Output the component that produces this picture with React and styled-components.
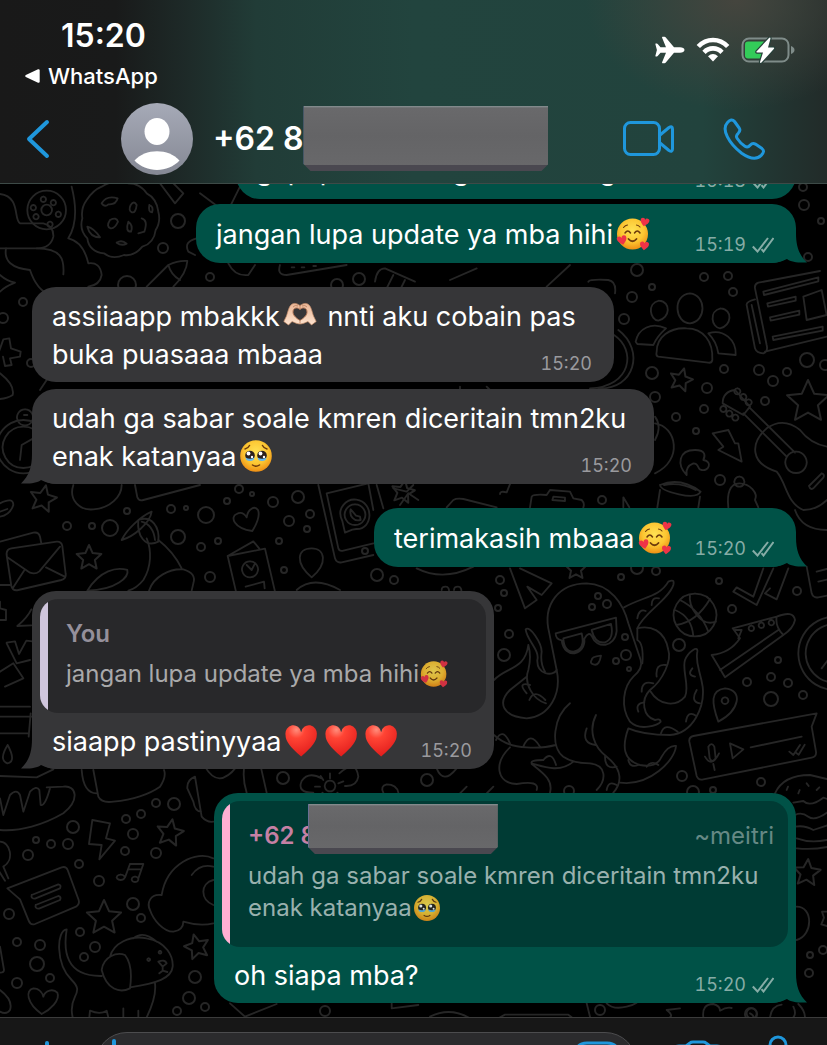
import React from "react";
import styled, { createGlobalStyle } from "styled-components";

const GlobalStyle = createGlobalStyle`
  * {
    box-sizing: border-box;
  }

  body {
    margin: 0;
    overflow: hidden;
    background: #000;
    color: #fff;
    font-family: Inter, "Liberation Sans", sans-serif;
  }

  button {
    display: flex;
    padding: 0;
    border: 0;
    background: none;
    color: inherit;
    font: inherit;
  }
`;

const Screen = styled.div`
  display: flex;
  flex-direction: column;
  height: 100vh;
  overflow: hidden;
`;

/* ---------- header ---------- */

const Header = styled.header`
  position: relative;
  flex: none;
  border-bottom: 1px solid #3d4a47;
  background:
    radial-gradient(ellipse 150px 110px at 89% 0, #45453e 0%, rgba(69, 69, 62, 0) 100%),
    linear-gradient(90deg, #191919 0%, #191a1a 14%, #1e2b29 23%, #213c37 31%, #22443e 50%, #22433d 85%, #222b29 100%);
`;

const StatusBar = styled.div`
  display: flex;
  justify-content: space-between;
  padding: 14px 32px 4px 25px;
`;

const StatusLeft = styled.div`
  display: flex;
  flex-direction: column;
  gap: 4px;
`;

const Clock = styled.time`
  padding-left: 36px;
  font-size: 32px;
  font-weight: 600;
  line-height: 44px;
`;

const BackToApp = styled.a`
  display: flex;
  align-items: center;
  gap: 8px;
  color: #fff;
  font-size: 22px;
  font-weight: 500;
  line-height: 28px;
  text-decoration: none;
`;

const StatusIcons = styled.div`
  display: flex;
  align-items: center;
  gap: 11px;
  height: 71px;
`;

const NavBar = styled.nav`
  display: flex;
  align-items: center;
  height: 89px;
  padding: 0 62px 0 26px;
`;

const Avatar = styled.div`
  display: flex;
  margin: 0 20px 0 71px;
`;

const Contact = styled.h1`
  display: flex;
  flex: 1;
  align-items: center;
  margin: 0;
  font-size: 32px;
  font-weight: 600;
  white-space: nowrap;
`;

const NavActions = styled.div`
  display: flex;
  align-items: center;
  gap: 48px;
  color: #1f97dc;
`;

const Redaction = styled.span`
  flex: none;
  width: ${(p) => (p.$small ? 190 : 245)}px;
  height: ${(p) => (p.$small ? 50 : 65)}px;
  margin: ${(p) => (p.$small ? "-16px 0 -2px -8px" : "0")};
  background: linear-gradient(180deg, #8a9496 0, #69696b 2px, #646466 50%, #68686a 100%);
  border-bottom: 6px solid #4a4850;
  border-left: 1px solid #6a6f93;
  clip-path: polygon(0 0, 100% 0, 100% calc(100% - 7px), calc(100% - 7px) 100%, 7px 100%, 0 calc(100% - 7px));
`;

/* ---------- chat ---------- */

const Chat = styled.main`
  position: relative;
  flex: none;
  overflow: hidden;
  background: #000;
`;

const Wallpaper = styled.svg`
  position: absolute;
  inset: 0;
  width: 100%;
  height: 100%;
  fill: none;
  stroke: #262626;
  stroke-width: 2;
  stroke-linecap: round;
  stroke-linejoin: round;
`;

const Messages = styled.ol`
  position: relative;
  display: flex;
  flex-direction: column;
  margin: -44px 0 0;
  padding: 0 31px 14px 32px;
  list-style: none;
`;

const Bubble = styled.li`
  position: relative;
  align-self: ${(p) => (p.$out ? "flex-end" : "flex-start")};
  width: ${(p) => p.$width}px;
  max-width: 100%;
  margin-top: ${(p) => p.$gap || 0}px;
  border-radius: 24px;
  background: ${(p) => (p.$out ? "#005247" : "#363638")};
  color: ${(p) => (p.$out ? "#005247" : "#363638")};
`;

const TailShape = styled.svg`
  position: absolute;
  bottom: 0;
  ${(p) => (p.$out ? "right: -11px;" : "left: -11px; transform: scaleX(-1);")}
`;

const Body = styled.div`
  position: relative;
  display: grid;
  align-items: center;
  min-height: ${(p) => (p.$quoted ? 56 : 59)}px;
  padding: ${(p) => (p.$quoted ? 9 : 11)}px 22px 8px 20px;
  color: #fff;

  > * {
    grid-area: 1 / 1;
  }
`;

const Text = styled.p`
  margin: 0;
  font-size: 27px;
  line-height: 38px;
  white-space: nowrap;
`;

const Meta = styled.div`
  display: flex;
  place-self: end;
  align-items: center;
  gap: 6px;
  color: ${(p) => (p.$out ? "#86aca6" : "#9a9a9e")};
  font-size: 18px;
  font-variant-numeric: tabular-nums;
  line-height: 20px;
`;

const QuoteWrap = styled.div`
  padding: 8px 8px 0;
`;

const QuoteBox = styled.blockquote`
  margin: 0;
  padding: 19px 14px 23px 26px;
  overflow: hidden;
  border-radius: 18px;
  background: ${(p) =>
    p.$out
      ? "linear-gradient(90deg, #ffb0d3 8px, #003b34 8px)"
      : "linear-gradient(90deg, #d0c6dd 8px, #28282a 8px)"};
  color: ${(p) => (p.$out ? "#99b1ae" : "#a9a9aa")};
  font-size: 24px;
  line-height: 32px;
`;

const QuoteHead = styled.div`
  display: flex;
  align-items: center;
  height: 32px;
  margin-bottom: 8px;
  white-space: nowrap;
`;

const QuoteAuthor = styled.strong`
  color: ${(p) => (p.$out ? "#c580a4" : "#95909b")};
  font-weight: 600;
`;

const QuoteAlias = styled.span`
  margin-left: auto;
  color: #668985;
`;

const QuoteText = styled.p`
  margin: 0;
  white-space: nowrap;
`;

const EmojiSvg = styled.svg`
  width: ${(p) => (p.$small ? 28 : 34)}px;
  height: ${(p) => (p.$small ? 28 : 34)}px;
  margin: 0 ${(p) => (p.$small ? 1 : 3)}px;
  vertical-align: ${(p) => (p.$small ? -6 : -7)}px;
  opacity: ${(p) => (p.$small ? 0.85 : 1)};
`;

/* ---------- composer ---------- */

const Composer = styled.form`
  display: flex;
  flex: none;
  align-items: center;
  padding: 14px 24px 20px;
  border-top: 1px solid #3b3b3b;
  background: #171717;
  color: #1f97dc;
`;

const Field = styled.label`
  display: flex;
  flex: 1;
  align-items: center;
  height: 64px;
  margin: 0 34px 0 25px;
  padding: 0 16px;
  border: 1px solid #4c4c4e;
  border-radius: 32px;
  background: #2b2b2d;
`;

const Caret = styled.span`
  width: 4px;
  height: 50px;
  border-radius: 2px;
  background: #1f97dc;
`;

const Input = styled.input`
  flex: 1;
  min-width: 0;
  border: 0;
  outline: 0;
  background: none;
  color: #fff;
  font-size: 27px;
`;

const ComposerActions = styled.div`
  display: flex;
  align-items: center;
  gap: 28px;
`;

/* ---------- emoji ---------- */

const HEART = "M16 29C5 20 1 15 1 9.500A7.500 7.500 0 0 1 16 7a7.500 7.500 0 0 1 15 2.500C31 15 27 20 16 29Z";

function FaceGradient({ id }) {
  return (
    <radialGradient id={id} cx=".5" cy=".38" r=".62">
      <stop offset="0" stopColor="#ffe254" />
      <stop offset=".6" stopColor="#fcc632" />
      <stop offset="1" stopColor="#ee8f14" />
    </radialGradient>
  );
}

function LoveFace({ small }) {
  return (
    <EmojiSvg $small={small} viewBox="0 0 34 34" role="img" aria-label="smiling face with hearts">
      <defs>
        <FaceGradient id="love" />
      </defs>
      <circle cx="16.500" cy="17" r="15.500" fill="url(#love)" />
      <g fill="none" stroke="#6d3b0c" strokeWidth="1.500" strokeLinecap="round">
        <path d="M9 16q2.800-4 5.500 0M18.500 16q2.800-4 5.500 0" />
        <path d="M7.500 10.500q1.800-2.300 4-2.500M20.500 8q2 .2 3.500 2" strokeWidth="1.100" />
        <path d="M12.500 22q4 4.500 8 0" strokeWidth="1.800" />
      </g>
      <g fill="#ef3347">
        <path d={HEART} transform="translate(25 0) rotate(12) scale(.29)" />
        <path d={HEART} transform="translate(0 20) rotate(-14) scale(.32)" />
        <path d={HEART} transform="translate(24 24) rotate(6) scale(.3)" />
      </g>
    </EmojiSvg>
  );
}

function TearyFace({ small }) {
  return (
    <EmojiSvg $small={small} viewBox="0 0 34 34" role="img" aria-label="face holding back tears">
      <defs>
        <FaceGradient id="teary" />
      </defs>
      <circle cx="17" cy="17" r="15.800" fill="url(#teary)" />
      <circle cx="11" cy="16.500" r="4.800" fill="#2c211c" />
      <circle cx="23" cy="16.500" r="4.800" fill="#2c211c" />
      <path d="M6.500 18.500q4.500 2.500 9 0-.5 3.500-4.500 3.500t-4.500-3.500ZM18.500 18.500q4.500 2.500 9 0-.5 3.500-4.500 3.500t-4.500-3.500Z" fill="#62b8ee" />
      <g fill="#fff">
        <circle cx="9.500" cy="14.500" r="1.900" />
        <circle cx="21.500" cy="14.500" r="1.900" />
        <circle cx="13" cy="18" r="1.200" />
        <circle cx="25" cy="18" r="1.200" />
      </g>
      <path
        d="M6 10q3-.5 4.500-3.500M28 10q-3-.5-4.500-3.500M13.500 26q3.500 2.500 7 0"
        fill="none"
        stroke="#6d3b0c"
        strokeWidth="1.500"
        strokeLinecap="round"
      />
    </EmojiSvg>
  );
}

function HeartHands() {
  return (
    <EmojiSvg viewBox="0 0 34 34" role="img" aria-label="heart hands">
      <defs>
        <linearGradient id="skin" x1="0" y1="0" x2="0" y2="1">
          <stop offset="0" stopColor="#e9b696" />
          <stop offset="1" stopColor="#fde3cf" />
        </linearGradient>
      </defs>
      <path
        d="M17 7c-2-2.500-6-3.500-8.500-1.500C5.500 8 5 13 3.500 17L.8 22.500l4.700 3.500 3.500-3.500c2.500 1 5.500 2.500 8 2.500s5.500-1.500 8-2.500l3.500 3.500 4.700-3.500-2.700-5.500C29 13 28.500 8 25.500 5.500 23 3.500 19 4.500 17 7Z"
        fill="url(#skin)"
        stroke="#c98f6c"
        strokeWidth=".7"
      />
      <path d="M17 10.500c-3-3-7.500-1.500-7 3 .3 3.500 4 6 7 8 3-2 6.700-4.500 7-8 .5-4.500-4-6-7-3Z" fill="#363638" stroke="#b77a59" />
      <path d="M17 5.500v4.500M17 22v2.500M10 8q2-2.500 5-1M24 8q-2-2.500-5-1" fill="none" stroke="#c08563" strokeWidth=".9" />
    </EmojiSvg>
  );
}

function RedHeart() {
  return (
    <EmojiSvg viewBox="0 0 34 34" role="img" aria-label="red heart">
      <defs>
        <radialGradient id="red" cx=".35" cy=".15" r=".9">
          <stop offset="0" stopColor="#ff8d7c" />
          <stop offset=".3" stopColor="#ff4434" />
          <stop offset="1" stopColor="#e01b1b" />
        </radialGradient>
      </defs>
      <path d={HEART} transform="translate(.5 .5) scale(1.040 1.100)" fill="url(#red)" />
    </EmojiSvg>
  );
}

/* ---------- wallpaper doodles ---------- */

// x, y, radius
const DOTS = [
  [178, 221, 7], [163, 248, 5], [210, 277, 4], [127, 285, 9], [23, 302, 4], [3, 318, 5], [31, 363, 4],
  [337, 285, 6], [359, 279, 6], [632, 297, 5], [652, 287, 3], [637, 270, 6], [704, 277, 4], [728, 276, 4],
  [733, 292, 4], [624, 319, 5], [652, 373, 6], [724, 369, 4], [707, 388, 5], [655, 397, 5], [676, 417, 4],
  [704, 409, 4], [696, 431, 3], [759, 370, 5], [773, 381, 5], [787, 372, 4], [807, 360, 7], [765, 401, 4],
  [720, 480, 5], [602, 500, 4], [825, 365, 5], [803, 187, 4], [804, 205, 5], [821, 221, 3], [808, 257, 4],
  [239, 489, 4], [252, 494, 2], [227, 501, 3], [273, 502, 5], [298, 497, 6], [171, 509, 4], [186, 508, 2],
  [206, 515, 8], [127, 511, 3], [67, 526, 4], [92, 526, 3], [110, 528, 8], [178, 537, 7], [201, 547, 4],
  [218, 541, 3], [289, 521, 5], [310, 514, 4], [307, 529, 3], [279, 541, 3], [284, 570, 3], [210, 577, 5],
  [365, 551, 3], [377, 575, 6], [394, 580, 4], [500, 580, 4], [504, 593, 3], [498, 608, 3], [509, 634, 4],
  [504, 655, 6], [621, 577, 3], [656, 571, 4], [637, 568, 6], [719, 581, 3], [732, 609, 4], [679, 645, 6],
  [797, 591, 4], [778, 660, 3], [747, 682, 4], [771, 677, 4], [788, 683, 4], [803, 695, 4], [771, 699, 7],
  [682, 776, 5], [761, 782, 4], [713, 790, 3], [693, 792, 6], [427, 780, 6], [569, 791, 5], [598, 596, 3],
  [607, 604, 4], [592, 607, 3], [625, 637, 3], [626, 655, 5], [616, 661, 3], [629, 669, 2], [283, 778, 6],
  [156, 803, 4], [174, 804, 6], [126, 819, 4], [141, 814, 4], [73, 827, 6], [133, 834, 5], [36, 840, 3],
  [51, 844, 4], [68, 844, 5], [28, 855, 5], [79, 864, 4], [125, 851, 4], [156, 853, 5], [99, 881, 5],
  [133, 904, 6], [141, 918, 4], [9, 914, 5], [80, 932, 4], [17, 942, 4], [40, 945, 5], [95, 947, 5],
  [84, 957, 4], [37, 964, 7], [50, 978, 4], [17, 983, 5], [195, 977, 6], [189, 998, 6], [177, 1011, 4],
  [205, 1007, 4], [325, 1011, 5], [810, 955, 3], [809, 973, 4], [823, 950, 4], [600, 1010, 5], [751, 1014, 6],
];

// x, y, scale, rotation
const STARS = [
  [681, 380, 12, 15], [808, 402, 22, 0], [43, 499, 14, 12], [89, 558, 13, 0], [170, 833, 14, 10],
  [104, 918, 18, 0], [197, 947, 13, -15], [807, 873, 14, 5], [576, 569, 11, 0], [403, 492, 12, 10],
];

const STAR = "M0-1 .28-.38 .95-.31 .45.15 .59.81 0 .48-.59.81-.45.15-.95-.31-.28-.38Z";

// each sheet is drawn at three times its final size
const SHEETS = [
  {
    at: "0 180",
    paths: [
      "M0 42C62 50 40 118 60 130h70q32 8 30 40-8 35-50 35H0",
      "M18 205Q8 262 90 270 110 330 150 345M110 205c72 0 84 30 80 78",
      "M215 20q25 100-10 155 45 10 60 75 35-5 40 35-5 30-40 35",
      "M82 90a58 58 0 1 0 116 0a58 58 0 1 0-116 0M124 90a16 16 0 1 0 32 0a16 16 0 1 0-32 0",
      "M100 75a8 8 0 1 0 .1 0M130 50a8 8 0 1 0 .1 0M160 60a8 8 0 1 0 .1 0M175 95a8 8 0 1 0 .1 0M150 125a8 8 0 1 0 .1 0M108 102a8 8 0 1 0 .1 0",
      "M260 60q20-30 45-40 40-25 80-10 35 0 55 30 30 15 35 55 8 30-8 55-5 40-40 50-25 30-55 25-35 15-60-5-45-5-50-45-25-25-15-60-5-30 13-55",
      "M305 70q15-25 48-15-5 20-28 18-10 10-20-3M392 75q10-15 18 0-3 25-14 22-12-5-4-22M330 120q20-10 24 5-10 22-22 20-15-5-2-25M262 140q20 5 38 32-30 0-38-32M385 125q15 10 8 30-18 0-8-30M425 115q20 5 8 40l-18 5M350 188q15-10 30 3-15 8-30-3M448 75q14 5 8 22-12 0-8-22",
      "M440 320l65-65q30-14 57-12-2 37-42 77M505 255q8 30 35 45",
      "M-5 520 10 478l18-3 5 30 29 10-2 15-30 5 5 20-20 3-6-28",
      "M0 580q45 35 38 65-15 10-38 12M0 285q20 18 45 23-30 12-45 27",
      "M70 720a80 80 0 1 0 .1 0M70 740a62 62 0 1 0 .1 0M75 688a24 24 0 1 0 .1 0M60 840l5-45 35-20M72 705h10",
      "M120 630l20-30M480 10l45 60 25-30-40-40M600 40l80 60 40-80M590 175q-40 10-25 40l20 10M685 250q20 40 60 35l20-30",
      "M840 255q-10 30 20 30l180-30M875 262h8M905 262h8M940 258h8M1125 305q5-40 30-40l90 40M1180 285l-20 40M1215 300l-20 40",
    ],
  },
  {
    at: "410 270",
    paths: [
      "M840 70c-55 5-45 90 0 90 50-5 50-85 0-90M740 245c0-45 40-73 90-70 50 0 80 40 77 95q-2 10-12 8l-150-18q-8-2-5-15",
      "M747 92c-37 8-27 58-2 60 35-7 40-57 2-60M677 215c8-40 48-60 91-40q-28 25-38 50l-48-3Z",
      "M932 115c-37 8-27 58-2 60 35-7 40-57 2-60M895 190c45-15 85 20 82 65l-52-5q-5-35-30-60",
      "M1035 55q-2-13 10-17l185-35M1035 55l35 170q5 20-10 25-20 0-25-15l-25-130q-2-10 25-17M1065 245l186-45M1025 105l25 115",
      "M1060 65 1225 22v12L1062 75ZM1072 100l85-20v12l-83 18ZM1080 142l88-20v12l-86 18ZM1088 200l150-30v12l-148 28ZM1180 80l55-20 15 75-60 15Z",
      "M975 360q-37 5-37 40l62 35 20-25ZM1000 430l130 130M1018 412l137 136M1158 545a32 32 0 1 0 .1 0",
      "M1070 475c-50 45-50 105 30 130 30 35 30 95 80 115q40 0 71-30M1070 475q50-35 100 5 30 40 81 50M1155 720q20 60 96 60",
      "M1235 610l-38 38q5 15 15 5l28-30q5-10-5-13M982 355a9 9 0 1 0 .1 0M1000 372a9 9 0 1 0 .1 0M1016 388a9 9 0 1 0 .1 0M940 408a9 9 0 1 0 .1 0M958 422a9 9 0 1 0 .1 0M976 434a9 9 0 1 0 .1 0",
      "M908 490l47-10 20 40h10l10 55-70-35 15-10ZM830 615c-30-30-25-75 25-75 35 0 30 20 25 30 30 5 15 35-5 30-15 0-5-20-25-20q-25 10-20 35",
      "M750 645q60-25 122 20-10 20-65 8t-57-28M762 645q50-10 95 15M750 660l-8 52M870 680l-5 32",
      "M955 712c-5-42 5-72 33-72 32 0 57 30 47 50l10 22M988 620a15 15 0 1 0 .1 0M640 712v-30l18 30",
      "M360 712l5-32q5-8 45-5l10-15 60 5 10 20 25 5q10 10 5 22M430 680l35 3v10l-38-3ZM110 712l20-22q10-6 30-3l100 25",
      "M612 195c68 45 53 155-72 160M625 180c80 60 50 180-60 175M735 460c65 10 85 110 0 150M735 440q22 30 0 70",
      "M535 35q5-8 60-5 25 5 20 40M270 672q0-10 20-5l12-30M120 30l80-35M150 350v10M230 350l10 10M410 50l70-65",
    ],
  },
  {
    at: "0 480",
    paths: [
      "M20 225q-2-17 14-20l136-20q14-1 17 13l10 84q2 14-13 18L55 330q-17 4-21-12ZM22 232l68 46q16 6 28-4l62-74M38 325l34-53M194 290l-56-28M0 185l100-27q16-3 20 12l4 20M0 315h30",
      "M757 153c-57-8-67-43-47-51 18-10 28 6 30 10 4-26 24-36 34-22 8 20-6 45-17 63",
      "M683 228l77-44 18 22M683 228l112-22 30 129M683 228l25 107M750 244a24 24 0 1 0 .1 0M740 255l15 15 10-20M737 320l55-15 2 20",
      "M935 205c-45 0-50 45 0 87 50-42 40-87 0-87M890 330q50-45 130 0",
      "M955 15l50 220q5 15 20 12l95-22M1130 15l20 70M980 40l35 165q3 10 15 7l90-22M980 40l125-30 15 80",
      "M1035 158l-8-35c-20-40 15-68 42-64 55 8 50 90 0 88l-12 2ZM1065 73a31 31 0 1 0 .1 0M1052 88c-5 20 10 38 30 32l-2-10-12-3-10-12Z",
      "M262 332c38-62 88-72 120-62 6 20-32 60-120 62M440 175c15 35 15 85-10 125q-20 25-45 32M475 180q45 35 70 85M447 332c13-42 63-67 103-64q40 12 30 42l-5 22",
      "M365 180c15-30 55-70 90-85-5 35-55 75-90 85M415 120c40-15 65 20 60 65-40 20-65-20-60-65M425 125q35 10 40 55",
      "M220 15c-15 45 20 77 60 73 50-3 85-38 85-73M405 15l7 37q4 12 18 8l170-45M0 70q40-20 40 5-10 30-40 35M0 95l22-8",
      "M20 488l25-4 12 38 22-40 18 2M0 575l40-25 30 45-55 25M20 490l30 60 40-10M0 365v20l18 5v30H0M52 438q30-25 42-50M52 438l42-2",
      "M23 795q-28 45-1 55 28-5 1-55M0 680h90M0 710h95M0 760h85M0 888l110 4 50-24M92 700l-6 70",
      "M1180 25l40 10 20-20M1200 75l25-35 30 20",
    ],
  },
  {
    at: "410 560",
    paths: [
      "M440 330l-22-110c-23-90 32-150 112-150 70 2 110 60 125 120l37 110q8 25-22 50c-30 30-40 90-10 135 30 30 85 10 92 0q0-10-17-5c-35-10-45-60-15-90 40-30 65-90 55-120-10-60-55-75-93-65",
      "M642 142c58-32 108-32 133-77q20-10 15 10c-15 45-90 85-108 130v35q20 10 15 70",
      "M720 392c30 48 80 48 105 18 15-30-10-80 0-110 10-25 40-45 37-25-7 35 8 55 16 105 7 60-28 140-98 145q-80 0-125-20c-20 55-15 95 35 110q50 10 65-25 20-35 43-32c-3 42-78 122-168 110",
      "M355 255c-10 75-65 65-103 105M355 255q10 35 0 75c-15 40 15 90 53 100M440 330c-10 20-60 15-58-30 8-30-32-60-35-92 13-13 48 42 48 67q-5 35 10 60M440 330c15 70-20 140-90 145-70-5-90-45-50-85l50-40",
      "M480 430c-50 40-60 130-20 160q30 20 80 20c50 5 50 50 20 80M558 465c-23 45-8 95 32 125 50 40 45 80 20 108M252 525q38 35 98 37 50 3 87-7M300 562c-50 48-40 108 20 110q70-12 60 18M490 605c-40 35-90 15-125 5q-5-10 35-10M365 612c35 28 65 48 55 86",
      "M437 220l181-47 2 40c-5 50-60 55-75 15q-8-15-22 8c5 50-60 65-68 5q-18-3-18-21ZM460 235l55-15q12 50-25 55-28 0-30-40M545 210l58-18q10 45-18 55-30 5-40-37",
      "M545 300q0-10 28-13-5 30-20 27t-8-14M725 135q0-25 22-20M682 175q5-30 25-22M740 350q-5-40 28-35M695 395q0-35 35-25M685 455q-10-25 18-28M753 520q10-35 50-5M828 485q5-35 30-18M870 430q-30-5-10-40M855 350q-25-5-8-25M350 400q-30-35 10-25M358 420q15-35 48 0M258 540q20-40 42 10M340 560q20-50 50 0M558 555q-45-5-28-50M585 590q0 40 35 30M655 600q5 25 30 15M710 620q15-20 35-5M400 600q25-30 38 15M590 690q5-30 30-15",
      "M855 101a64 64 0 1 0 .1 0M810 120q60 30 85 95M800 195q60-10 100-78M840 103q-5 30 20 62t58 20M795 150q50 20 55 78",
      "M905 285q55-5 85-50l-22-30 132-35q50-20 55 10-5 25-35 45L945 352ZM930 330l175-120M1100 170q-5 30 20 55M975 210l20 0-10 25M1024 197a8 8 0 1 0 .1 0M1054 188a8 8 0 1 0 .1 0M1084 180a8 8 0 1 0 .1 0",
      "M300 25l45 120 35-25-28-40 43 25 30-35-95-45M970 95l10-13 50 28 30-85M970 95l70 40 50-110M1065 100l35 18 35-93M1065 100l15-15",
      "M925 485c-20-55-25-95 20-100 55 5 45 65-20 100M945 412a10 10 0 1 0 .1 0",
      "M838 545q-2-13 12-17l370-68-15 40 13 75q2 15-13 18l-325 65q-15 4-20-10ZM960 550l40 18-32 27ZM895 560q10-15 18 0l4 35q-10 15-18 0ZM885 590q20 35 42-10M910 612l4 18M1022 562l153-32M1138 575l12 10 20-30M1158 578l8 6 18-30",
      "M1275 170a110 110 0 1 0 .1 0M1275 192a88 88 0 1 0 .1 0M1270 240a35 35 0 0 0-5 45l-30 40M1190 20l15 80q5 15 20 12l35-7M1220 35l30-8M1225 65l26-6",
      "M1095 700q25-55 105-55l51 12M1130 690l4-10M1165 700l4-10M1190 670l6 8M1220 690l8-8M95 90q0-10 12-10t10 20M132 90q0-10 12-10t10 20M20 25q80 40 170-5M80 625q20 50 60 0M150 700l20-20M230 700l20-20",
    ],
  },
  {
    at: "0 770",
    paths: [
      "M0 180c60 5 130-15 190-50 50-40 40-85 0-80l-50 2M0 85l10 50 20-60q20-20 30 0l10 50 20-60q20-20 28-5l4 45q13 5 28-50",
      "M277 150l53 10-12 45 27 7-47 56 7-43-38-3ZM390 282h40l-15 43M390 282l-15 40M386 298h38M362 314a12 8 0 1 0 .1 0M405 320a10 8 0 1 0 .1 0",
      "M22 355l163-63q13-4 18 8l33 90q4 12-8 20l-123 52q-13 5-19-10L60 388ZM95 375l80-32q10 2 5 12l-75 31q-13 0-10-11M107 405l68-27q10 2 5 12l-63 26q-13 0-10-11",
      "M0 215c30 0 45 55 10 75l15 35M-5 300l20 32",
      "M330 560c10-40 60-65 110-55 60 10 80 55 78 85-3 35-48 50-128 62M305 600c5-40 45-55 70-45 20 25 20 65 15 100-30 15-70 5-85-55M200 478c-30 2-35 102 15 152 20 20 20 30 10 50q-15 30-7 62M200 478c-10 62-5 142 105 140M400 505q30-25 70 10M446 565a4 4 0 1 0 .1 0M480 543a4 4 0 1 0 .1 0M475 575q20-8 25 5l-12 10ZM488 590v12l-10 8M488 602l14 4M465 640q5 40-25 102M268 742l2-20q30 13 50 0l5 20M370 715v27M415 722v20",
      "M125 732c-45-32-50-72-25-77 20 0 28 17 30 25 5-20 30-25 42-12 10 22-22 52-47 64",
      "M640 265c-50-25-140 15-155 110-35-5-45 25-35 45 10 30 40 65 70 65q30-5 30-30 50 15 90 5M575 315q25-35 65-25M640 330c-40 10-40 60 0 75",
      "M990 32a16 16 0 1 0 .1 0M940 68q-50 0-35-35 20-30 60-8M1018 10q50-45 57 10-5 30-40 28M960 50h-15M968 68l-12 14M1012 68l12 14M1015 40l15-6M990 25v-15M970 30l-8-12M1150 68q-10-20 10-25 30 0 35 25",
      "M245 0q5 70 45 70M280 0l15 80q10 20 45 15 90-10 140-45 20-30 12-50M585 20l20 120q15 18 35 15M585 20q-25 10-23 35l18 40q5 30 23 30M615-10q40 70 95 0M735-20q-10 40 5 88M780-20l20 88",
      "M0 530l12 70q0 8-12 8M0 660q40 30 30 60-10 15-30 5M690 700l45 40 95-38M1175 700v15l80-10",
    ],
  },
  {
    at: "410 780",
    paths: [
      "M1150 68l30-5q20 20 60-10l15 5M1155 105q20-10 40 5t60-15M1155 140q30-5 55 10l45-15M1160 175q40 15 90 5M1160 205q50 5 95-5",
      "M1160 380c50 0 50 85 0 100M1251 395l-15 0 6 18-8 20 17 5",
      "M60 710q60-30 120 5M270 712l15-8h190l10 8M530 670l10 40M590 670q20 20 60 10 20-5 30-12M770 690l40-5M770 690q20 15 10 22M880 712q-5-40 30-40 20 5 20 20 20-12 35-8M1025 685a15 15 0 1 0 .1 0M1020 700q10 5 10 10M1080 712q5-35 35-38M1165 672q20 20 20 40M1150 680q10 20 0 32",
    ],
  },
];

function Doodles() {
  return (
    <Wallpaper viewBox="0 184 827 833" preserveAspectRatio="xMidYMid slice" aria-hidden="true">
      {DOTS.map(([x, y, r]) => (
        <circle key={`${x}-${y}`} cx={x} cy={y} r={r} />
      ))}
      {STARS.map(([x, y, size, turn]) => (
        <path
          key={`${x}-${y}`}
          d={STAR}
          transform={`translate(${x} ${y}) rotate(${turn}) scale(${size})`}
          strokeWidth={2 / size}
        />
      ))}
      {SHEETS.map((sheet) => (
        <g key={sheet.at} transform={`translate(${sheet.at}) scale(.33333)`} strokeWidth="5.500">
          {sheet.paths.map((d) => (
            <path key={d} d={d} />
          ))}
        </g>
      ))}
    </Wallpaper>
  );
}

/* ---------- message parts ---------- */

function Tail({ out }) {
  return (
    <TailShape $out={out} width="36" height="30" viewBox="0 0 36 30" aria-hidden="true">
      <path d="M25 0C25 13 28 22 36 29.500C28 30 20 29 16 26Q8 30 0 30V0Z" fill="currentColor" />
    </TailShape>
  );
}

function Ticks() {
  return (
    <svg width="22" height="16" viewBox="0 0 22 16" fill="none" stroke="currentColor" strokeWidth="2" aria-label="Delivered">
      <path d="M.8 9.500l4.700 5L16 1M9.500 12.200l2 2.300L21.500 1" />
    </svg>
  );
}

function Message({ out, width, gap, time, tail, quote, children }) {
  return (
    <Bubble $out={out} $width={width} $gap={gap}>
      {tail && <Tail out={out} />}
      {quote && <QuoteWrap>{quote}</QuoteWrap>}
      <Body $quoted={Boolean(quote)}>
        <Text>{children}</Text>
        <Meta $out={out}>
          <time>{time}</time>
          {out && <Ticks />}
        </Meta>
      </Body>
    </Bubble>
  );
}

export default function App() {
  return (
    <Screen>
      <GlobalStyle />
      <Header>
        <StatusBar>
          <StatusLeft>
            <Clock>15:20</Clock>
            <BackToApp href="#whatsapp">
              <svg width="15" height="14" viewBox="0 0 15 14" fill="#fff" aria-hidden="true">
                <path d="M13 .3Q14.700-.2 14.700 1.500v11q0 1.700-1.700 1.200L.8 8Q-.4 7 .8 6Z" />
              </svg>
              WhatsApp
            </BackToApp>
          </StatusLeft>
          <StatusIcons>
            <svg width="30" height="28" viewBox="0 0 30 28" fill="#fff" aria-label="Airplane mode">
              <path d="M29.500 14c0-1.600-2-2.700-4.500-2.700h-6L10.800 1.500Q10.300.8 9.500.8H7.600q-.8 0-.5.9l3.900 9.600H5.500L2.700 7.900Q2.400 7.500 1.900 7.500H.8Q.2 7.500.4 8.200L1.900 14 .4 19.800q-.2.7.4.7h1.100q.5 0 .8-.4l2.800-3.400H11L7.100 26.300q-.3.900.5.900h1.900q.8 0 1.300-.7L19 16.700h6c2.500 0 4.500-1.100 4.500-2.700Z" />
            </svg>
            <svg width="34" height="25" viewBox="0 0 34 25" aria-label="Wi-Fi">
              <g fill="none" stroke="#fff" strokeWidth="4.600">
                <path d="M2.300 9.500C10.500.8 23.500.8 31.700 9.500" />
                <path d="M8 15.300c5-5.200 13-5.200 18 0" />
              </g>
              <path d="M12 19.200q5-4.400 10 0L17 24.500Z" fill="#fff" />
            </svg>
            <svg width="54" height="28" viewBox="0 0 54 28" aria-label="Battery charging">
              <rect x="1.500" y="2.500" width="46" height="23" rx="6.500" fill="none" stroke="#7f8c89" strokeWidth="2" />
              <path d="M50 10q3.500 1.500 3.500 4T50 18Z" fill="#7f8c89" />
              <path d="M7 5.500h16v17H7q-3 0-3-3v-11q0-3 3-3Z" fill="#33cc59" />
              <path
                d="M28 2 15.500 15.500q-.5 1 .5 1h6L19 26q0 1.500 1.500.5L33 12.800q.5-1.300-.5-1.300h-5.500L29.500 2.500Q29.500 1 28 2Z"
                fill="#fff"
                stroke="#28413b"
                strokeWidth="2.400"
                paintOrder="stroke"
              />
            </svg>
          </StatusIcons>
        </StatusBar>
        <NavBar>
          <button type="button" aria-label="Back">
            <svg width="24" height="40" viewBox="0 0 24 40" fill="none" stroke="#1f97dc" strokeWidth="4" strokeLinecap="round" strokeLinejoin="round">
              <path d="M21 3 3 20l18 17" />
            </svg>
          </button>
          <Avatar>
            <svg width="72" height="72" viewBox="0 0 72 72" role="img" aria-label="Profile photo">
              <defs>
                <linearGradient id="avatar" x1="0" y1="0" x2="0" y2="1">
                  <stop offset="0" stopColor="#a6aab7" />
                  <stop offset="1" stopColor="#858894" />
                </linearGradient>
              </defs>
              <circle cx="36" cy="36" r="36" fill="url(#avatar)" />
              <ellipse cx="36" cy="28.500" rx="12.500" ry="13.500" fill="#fff" />
              <path d="M13.500 57.500C24 45 48 45 58.500 57.500 47 70 25 70 13.500 57.500Z" fill="#fff" />
            </svg>
          </Avatar>
          <Contact>
            +62 8<Redaction />
          </Contact>
          <NavActions>
            <button type="button" aria-label="Video call">
              <svg width="52" height="36" viewBox="0 0 52 36" fill="none" stroke="currentColor" strokeWidth="3" strokeLinejoin="round">
                <rect x="1.500" y="1.500" width="35" height="32" rx="6" />
                <path d="M37 14 46 6.500Q49.500 4.500 49.500 8v20q0 3.500-3.500 1.500L37 22" />
              </svg>
            </button>
            <button type="button" aria-label="Voice call">
              <svg width="42" height="42" viewBox="0 0 42 42" fill="none" stroke="currentColor" strokeWidth="3" strokeLinejoin="round">
                <path d="M4.500 4.500C7 1.500 9.500 1 11.500 3.500l4.700 6.500c1.300 2 .8 3.500-1 5.300-2 1.700-2.500 3-1 5.200 2.300 3.500 4.300 5.600 7.700 7.700 2.200 1.400 3.600 1 5.200-.9 1.600-1.900 3.200-2.500 5.300-1.200l6.600 4.500c2.300 1.700 1.900 4-.8 6.800-4.700 4.600-11.600 3.300-19.500-2.200C13 31 7.500 25.200 4.300 18.700 1.300 12.700 1 8.300 4.500 4.500Z" />
              </svg>
            </button>
          </NavActions>
        </NavBar>
      </Header>

      <Chat>
        <Doodles />
        <Messages>
          <Message out width={560} time="15:18">
            gapapa mbaaa gausah sungkan
          </Message>
          <Message out tail width={600} gap={5} time="15:19">
            jangan lupa update ya mba hihi
            <LoveFace />
          </Message>
          <Message width={582} gap={24} time="15:20">
            assiiaapp mbakkk
            <HeartHands /> nnti aku cobain pas
            <br />
            buka puasaaa mbaaa
          </Message>
          <Message tail width={622} gap={7} time="15:20">
            udah ga sabar soale kmren diceritain tmn2ku
            <br />
            enak katanyaa
            <TearyFace />
          </Message>
          <Message out tail width={422} gap={24} time="15:20">
            terimakasih mbaaa
            <LoveFace />
          </Message>
          <Message
            tail
            width={462}
            gap={24}
            time="15:20"
            quote={
              <QuoteBox>
                <QuoteHead>
                  <QuoteAuthor>You</QuoteAuthor>
                </QuoteHead>
                <QuoteText>
                  jangan lupa update ya mba hihi
                  <LoveFace small />
                </QuoteText>
              </QuoteBox>
            }
          >
            siaapp pastinyyaa
            <RedHeart />
            <RedHeart />
            <RedHeart />
          </Message>
          <Message
            out
            tail
            width={582}
            gap={24}
            time="15:20"
            quote={
              <QuoteBox $out>
                <QuoteHead>
                  <QuoteAuthor $out>+62 8</QuoteAuthor>
                  <Redaction $small />
                  <QuoteAlias>~meitri</QuoteAlias>
                </QuoteHead>
                <QuoteText>
                  udah ga sabar soale kmren diceritain tmn2ku
                  <br />
                  enak katanyaa
                  <TearyFace small />
                </QuoteText>
              </QuoteBox>
            }
          >
            oh siapa mba?
          </Message>
        </Messages>
      </Chat>

      <Composer>
        <button type="button" aria-label="Attach">
          <svg width="46" height="46" viewBox="0 0 46 46" stroke="currentColor" strokeWidth="4" strokeLinecap="round">
            <path d="M23 2v42M2 23h42" />
          </svg>
        </button>
        <Field>
          <Caret />
          <Input type="text" aria-label="Message" />
          <button type="button" aria-label="Stickers">
            <svg width="46" height="46" viewBox="0 0 46 46" fill="none" stroke="currentColor" strokeWidth="3">
              <path d="M13 2h20q11 0 11 11v14L27 44H13Q2 44 2 33V13Q2 2 13 2ZM44 27H33q-6 0-6 6v11" />
            </svg>
          </button>
        </Field>
        <ComposerActions>
          <button type="button" aria-label="Camera">
            <svg width="54" height="48" viewBox="0 0 54 48" fill="none" stroke="currentColor" strokeWidth="3">
              <path d="M8 6h7l4-3q1-1 3-1h10q2 0 3 1l4 3h7q6 0 6 6v28q0 6-6 6H8q-6 0-6-6V12q0-6 6-6Z" />
              <circle cx="27" cy="26" r="10" />
            </svg>
          </button>
          <button type="button" aria-label="Voice message">
            <svg width="50" height="58" viewBox="0 0 50 58" fill="none" stroke="currentColor" strokeWidth="3" strokeLinecap="round">
              <rect x="17" y="2" width="16" height="32" rx="8" />
              <path d="M9 24q0 18 16 18t16-18M25 42v12" />
            </svg>
          </button>
        </ComposerActions>
      </Composer>
    </Screen>
  );
}
